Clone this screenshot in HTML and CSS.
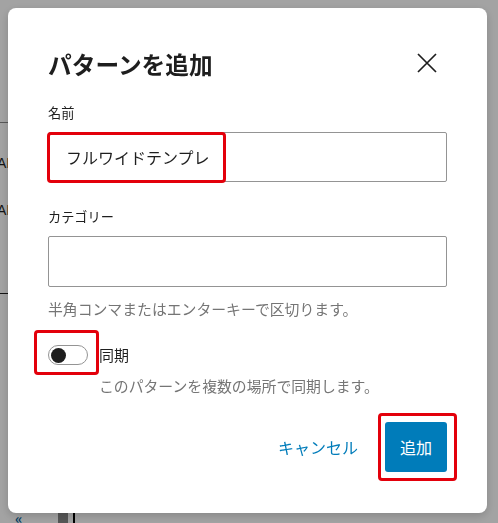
FILE: index.html
```html
<!DOCTYPE html>
<html lang="ja">
<head>
<meta charset="utf-8">
<title>パターンを追加</title>
<link rel="stylesheet" href="styles.css">
</head>
<body>
<div class="page">
  <div class="side-list">
    <div class="side-row">AI</div>
    <div class="side-row">AI</div>
  </div>
  <div class="page-foot">
    <span class="foot-icon">«</span>
    <span class="foot-block"></span>
    <span class="foot-line"></span>
  </div>
</div>

<div class="overlay">
  <div class="modal" role="dialog">
    <div class="modal-header">
      <h1 class="modal-title">パターンを追加</h1>
      <button class="close-btn" aria-label="閉じる">
        <svg width="20" height="20" viewBox="0 0 20 20"><path d="M1 1 L19 19 M19 1 L1 19" stroke="#1e1e1e" stroke-width="1.7" fill="none"/></svg>
      </button>
    </div>

    <label class="field-label">名前</label>
    <div class="field-wrap">
      <div class="text-input">フルワイドテンプレ</div>
      <span class="mark mark-name"></span>
    </div>

    <label class="field-label label-cat">カテゴリー</label>
    <div class="text-input empty"></div>
    <p class="help">半角コンマまたはエンターキーで区切ります。</p>

    <div class="toggle-row">
      <span class="toggle"><span class="knob"></span><span class="mark mark-toggle"></span></span>
      <span class="toggle-label">同期</span>
    </div>
    <p class="help help-sync">このパターンを複数の場所で同期します。</p>

    <div class="modal-footer">
      <button class="btn-link">キャンセル</button>
      <button class="btn-primary">追加<span class="mark mark-btn"></span></button>
    </div>
  </div>
</div>
</body>
</html>
```
FILE: styles.css
```css
* { box-sizing: border-box; }
html, body { margin: 0; padding: 0; }
body {
  width: 498px;
  height: 523px;
  overflow: hidden;
  background: #ffffff;
  font-family: "Noto Sans CJK JP", "Noto Sans", sans-serif;
  color: #1e1e1e;
}

/* underlying page */
.page {
  height: 523px;
  display: flex;
  flex-direction: column;
}
.side-list {
  width: 140px;
  margin-top: 122px;
  border-top: 1px solid #8a8a8a;
  border-bottom: 1px solid #222;
  height: 172px;
  padding-top: 30px;
}
.side-row {
  margin-left: -3px;
  height: 47px;
  font-family: "Liberation Sans", sans-serif;
  font-size: 14px;
  line-height: 20px;
  color: #1e1e1e;
}
.page-foot {
  margin-top: auto;
  height: 10px;
  display: flex;
  align-items: flex-start;
}
.foot-icon {
  display: inline-block;
  width: 13px;
  margin-left: 15px;
  color: #0a66a0;
  font-size: 14px;
  line-height: 10px;
  font-weight: 700;
}
.foot-block {
  margin-left: 30px;
  width: 10px;
  height: 10px;
  background: #888;
}
.foot-line {
  margin-left: 5px;
  width: 1.5px;
  height: 10px;
  background: #000;
}

/* overlay + modal */
.overlay {
  position: fixed;
  inset: 0;
  background: rgba(0, 0, 0, 0.36);
  padding: 8px;
}
.modal {
  width: 479px;
  height: 505px;
  background: #fff;
  border-radius: 8px;
  box-shadow: 0 3px 10px rgba(0, 0, 0, 0.18);
  padding: 32px 40px 0 40px;
  display: flex;
  flex-direction: column;
}
.modal-header {
  height: 48px;
  display: flex;
  align-items: center;
  justify-content: space-between;
}
.modal-title {
  margin: 0;
  font-size: 23.7px;
  font-weight: 700;
  line-height: 32px;
  color: #1e1e1e;
}
.close-btn {
  width: 40px;
  height: 40px;
  border: 0;
  background: transparent;
  padding: 0;
  display: flex;
  align-items: center;
  justify-content: center;
  margin-top: -2px;
  margin-right: 0;
}

.field-label {
  display: block;
  margin-top: 16px;
  font-size: 13.2px;
  line-height: 18px;
  height: 18px;
  color: #1e1e1e;
}
.label-cat { margin-top: 26px; }
.field-wrap {
  position: relative;
  margin-top: 10px;
}
.text-input {
  height: 50px;
  border: 1px solid #949494;
  border-radius: 2px;
  padding: 0 17px;
  font-size: 16px;
  line-height: 48px;
  color: #1e1e1e;
}
.text-input.empty { margin-top: 10px; height: 51px; }

.help {
  margin: 12px 0 0 0;
  font-size: 14.85px;
  line-height: 20px;
  color: #757575;
}

.toggle-row {
  margin-top: 26px;
  display: flex;
  align-items: center;
  gap: 11px;
  height: 20px;
}
.toggle {
  position: relative;
  width: 40px;
  height: 20px;
  border: 1px solid #949494;
  border-radius: 10px;
  display: flex;
  align-items: center;
  padding-left: 2px;
}
.knob {
  width: 15px;
  height: 15px;
  border-radius: 50%;
  background: #1e1e1e;
}
.toggle-label {
  font-size: 15px;
  line-height: 20px;
  color: #1e1e1e;
}
.help-sync {
  margin-top: 11px;
  padding-left: 51px;
}

.modal-footer {
  margin-top: 26px;
  display: flex;
  justify-content: flex-end;
  align-items: center;
  gap: 15px;
}
.btn-link {
  height: 50px;
  border: 0;
  background: transparent;
  padding: 0 12px;
  font-family: inherit;
  font-size: 16px;
  color: #007cba;
}
.btn-primary {
  position: relative;
  width: 62px;
  height: 50px;
  border: 0;
  border-radius: 3px;
  background: #007cba;
  color: #fff;
  font-family: inherit;
  font-size: 16px;
  padding: 0;
}

/* red annotation boxes */
.mark {
  position: absolute;
  border: 3px solid #e3000b;
  border-radius: 4px;
  pointer-events: none;
}
.mark-name { left: -1px; top: 0; width: 179px; height: 51px; }
.mark-toggle { left: -15px; top: -16px; width: 65px; height: 45px; }
.mark-btn { left: -7px; top: -9px; width: 79px; height: 68px; }
```
